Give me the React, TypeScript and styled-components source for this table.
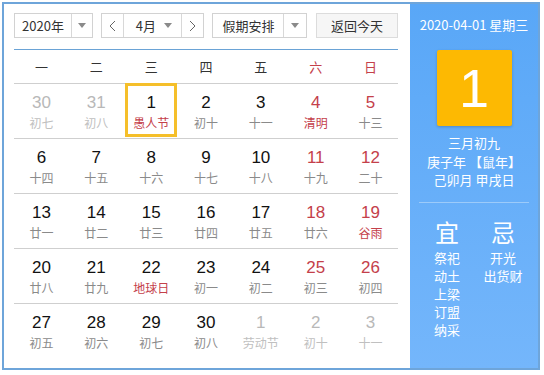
import React from 'react';
import styled, { createGlobalStyle } from 'styled-components';

const GlobalStyle = createGlobalStyle`
  html, body {
    margin: 0;
    padding: 0;
    background: #ffffff;
    font-family: "Liberation Sans", "Noto Sans CJK SC", sans-serif;
  }
`;

type Day = {
  num: number;
  lunar: string;
  other?: boolean;
  weekend?: boolean;
  festival?: boolean;
  selected?: boolean;
};

const weeks: Day[][] = [
  [
    { num: 30, lunar: '初七', other: true },
    { num: 31, lunar: '初八', other: true },
    { num: 1, lunar: '愚人节', festival: true, selected: true },
    { num: 2, lunar: '初十' },
    { num: 3, lunar: '十一' },
    { num: 4, lunar: '清明', weekend: true, festival: true },
    { num: 5, lunar: '十三', weekend: true },
  ],
  [
    { num: 6, lunar: '十四' },
    { num: 7, lunar: '十五' },
    { num: 8, lunar: '十六' },
    { num: 9, lunar: '十七' },
    { num: 10, lunar: '十八' },
    { num: 11, lunar: '十九', weekend: true },
    { num: 12, lunar: '二十', weekend: true },
  ],
  [
    { num: 13, lunar: '廿一' },
    { num: 14, lunar: '廿二' },
    { num: 15, lunar: '廿三' },
    { num: 16, lunar: '廿四' },
    { num: 17, lunar: '廿五' },
    { num: 18, lunar: '廿六', weekend: true },
    { num: 19, lunar: '谷雨', weekend: true, festival: true },
  ],
  [
    { num: 20, lunar: '廿八' },
    { num: 21, lunar: '廿九' },
    { num: 22, lunar: '地球日', festival: true },
    { num: 23, lunar: '初一' },
    { num: 24, lunar: '初二' },
    { num: 25, lunar: '初三', weekend: true },
    { num: 26, lunar: '初四', weekend: true },
  ],
  [
    { num: 27, lunar: '初五' },
    { num: 28, lunar: '初六' },
    { num: 29, lunar: '初七' },
    { num: 30, lunar: '初八' },
    { num: 1, lunar: '劳动节', other: true },
    { num: 2, lunar: '初十', other: true },
    { num: 3, lunar: '十一', other: true },
  ],
];

const weekdays = ['一', '二', '三', '四', '五', '六', '日'];

const Caret = () => (
  <svg width="8" height="5" viewBox="0 0 8 5">
    <path d="M0 0 L8 0 L4 5 Z" fill="#8a8a8a" />
  </svg>
);

const Chevron = ({ dir }: { dir: 'left' | 'right' }) => (
  <svg width="7" height="12" viewBox="0 0 7 12">
    <path
      d={dir === 'left' ? 'M6 1 L1 6 L6 11' : 'M1 1 L6 6 L1 11'}
      fill="none"
      stroke="#666"
      strokeWidth="1"
    />
  </svg>
);

const App = () => {
  return (
    <>
      <GlobalStyle />
      <Widget>
        <Main>
          <Toolbar>
            <Select width={79}>
              <SelectText width={56}>2020年</SelectText>
              <SelectArrow>
                <Caret />
              </SelectArrow>
            </Select>
            <Group>
              <StepButton>
                <Chevron dir="left" />
              </StepButton>
              <MonthSelect>
                <span>4月</span>
                <Caret />
              </MonthSelect>
              <StepButton last>
                <Chevron dir="right" />
              </StepButton>
            </Group>
            <Select width={95}>
              <SelectText width={70}>假期安排</SelectText>
              <SelectArrow>
                <Caret />
              </SelectArrow>
            </Select>
            <TodayButton>返回今天</TodayButton>
          </Toolbar>
          <Weekdays>
            {weekdays.map((w, i) => (
              <Weekday key={w} weekend={i >= 5}>
                {w}
              </Weekday>
            ))}
          </Weekdays>
          {weeks.map((week, wi) => (
            <Week key={wi} last={wi === weeks.length - 1}>
              {week.map((d, di) => (
                <Cell key={di}>
                  {d.selected && <SelectedFrame />}
                  <DayNum other={d.other} weekend={d.weekend}>
                    {d.num}
                  </DayNum>
                  <Lunar other={d.other} festival={d.festival}>
                    {d.lunar}
                  </Lunar>
                </Cell>
              ))}
            </Week>
          ))}
        </Main>
        <Side>
          <DateLine>2020-04-01 星期三</DateLine>
          <BigDay>1</BigDay>
          <LunarInfo>
            <div>三月初九</div>
            <div>庚子年 【鼠年】</div>
            <div>己卯月 甲戌日</div>
          </LunarInfo>
          <Divider />
          <Advice>
            <AdviceCol>
              <AdviceTitle>宜</AdviceTitle>
              <AdviceItem>祭祀</AdviceItem>
              <AdviceItem>动土</AdviceItem>
              <AdviceItem>上梁</AdviceItem>
              <AdviceItem>订盟</AdviceItem>
              <AdviceItem>纳采</AdviceItem>
            </AdviceCol>
            <AdviceCol>
              <AdviceTitle>忌</AdviceTitle>
              <AdviceItem>开光</AdviceItem>
              <AdviceItem>出货财</AdviceItem>
            </AdviceCol>
          </Advice>
        </Side>
      </Widget>
    </>
  );
};

export default App;

const Widget = styled.div`
  display: flex;
  margin: 2px;
  width: 534px;
  height: 364px;
  border: 2px solid #6ea5da;
  background: #ffffff;
`;

const Main = styled.div`
  width: 384px;
  padding: 9px 12px 0 10px;
  display: flex;
  flex-direction: column;
`;

const Toolbar = styled.div`
  display: flex;
  align-items: center;
  gap: 8px;
  height: 25px;
  padding-bottom: 11px;
  border-bottom: 1px solid #6aa3d6;
  font-family: "Noto Sans CJK SC", sans-serif;
  font-size: 13px;
  color: #333;
`;

const Select = styled.div<{ width: number }>`
  display: flex;
  box-sizing: border-box;
  width: ${(p) => p.width}px;
  height: 25px;
  border: 1px solid #d2d2d2;
  background: #fff;
`;

const SelectText = styled.div<{ width: number }>`
  width: ${(p) => p.width}px;
  display: flex;
  align-items: center;
  justify-content: center;
  border-right: 1px solid #d8d8d8;
`;

const SelectArrow = styled.div`
  flex: 1;
  display: flex;
  align-items: center;
  justify-content: center;
`;

const Group = styled.div`
  display: flex;
  box-sizing: border-box;
  width: 104px;
  height: 25px;
  border: 1px solid #d2d2d2;
  background: #fff;
`;

const StepButton = styled.div<{ last?: boolean }>`
  width: 21px;
  display: flex;
  align-items: center;
  justify-content: center;
  ${(p) => (p.last ? 'border-left: 1px solid #d8d8d8;' : 'border-right: 1px solid #d8d8d8;')}
`;

const MonthSelect = styled.div`
  flex: 1;
  display: flex;
  align-items: center;
  justify-content: space-between;
  padding: 0 9px 0 12px;
`;

const TodayButton = styled.div`
  box-sizing: border-box;
  width: 82px;
  height: 25px;
  display: flex;
  align-items: center;
  justify-content: center;
  border: 1px solid #dcdcdc;
  background: #f6f6f6;
  margin-left: 1px;
`;

const Weekdays = styled.div`
  display: grid;
  grid-template-columns: repeat(7, 1fr);
  height: 33px;
  align-items: center;
  border-bottom: 1px solid #cfcfcf;
  font-family: "Noto Sans CJK SC", sans-serif;
  font-size: 13px;
`;

const Weekday = styled.div<{ weekend?: boolean }>`
  text-align: center;
  color: ${(p) => (p.weekend ? '#c4404a' : '#333')};
`;

const Week = styled.div<{ last?: boolean }>`
  display: grid;
  grid-template-columns: repeat(7, 1fr);
  height: 54px;
  border-bottom: 1px solid ${(p) => (p.last ? 'transparent' : '#cfcfcf')};
`;

const Cell = styled.div`
  position: relative;
  display: flex;
  flex-direction: column;
  align-items: center;
  padding-top: 9px;
  gap: 2px;
`;

const SelectedFrame = styled.div`
  position: absolute;
  top: -1px;
  left: 1px;
  right: 2px;
  height: 54px;
  border: 3px solid #f5bf2a;
  box-sizing: border-box;
`;

const DayNum = styled.div<{ other?: boolean; weekend?: boolean }>`
  font-size: 17px;
  line-height: 20px;
  color: ${(p) => (p.other ? '#b8b8b8' : p.weekend ? '#c4404a' : '#111')};
`;

const Lunar = styled.div<{ other?: boolean; festival?: boolean }>`
  font-family: "Noto Sans CJK SC", sans-serif;
  font-size: 12px;
  line-height: 16px;
  color: ${(p) => (p.other ? '#c0c0c0' : p.festival ? '#c4404a' : '#8a8a8a')};
`;

const Side = styled.div`
  width: 128px;
  display: flex;
  flex-direction: column;
  align-items: center;
  background: linear-gradient(#59a7f7, #74b6fb);
  color: #fff;
  font-family: "Noto Sans CJK SC", sans-serif;
  padding-top: 12px;
`;

const DateLine = styled.div`
  font-size: 13px;
  line-height: 18px;
`;

const BigDay = styled.div`
  margin-top: 16px;
  width: 75px;
  height: 76px;
  display: flex;
  align-items: center;
  justify-content: center;
  background: #fdb902;
  border-radius: 2px;
  box-shadow: 0 1px 3px rgba(0, 0, 0, 0.2);
  font-family: "Liberation Sans", sans-serif;
  font-size: 54px;
`;

const LunarInfo = styled.div`
  margin-top: 8px;
  text-align: center;
  font-size: 13px;
  line-height: 18.5px;
`;

const Divider = styled.div`
  margin-top: 12px;
  width: 110px;
  height: 1px;
  background: #9ccbfa;
`;

const Advice = styled.div`
  margin-top: 14px;
  display: grid;
  grid-template-columns: 56px 56px;
  padding-left: 2px;
`;

const AdviceCol = styled.div`
  display: flex;
  flex-direction: column;
  align-items: center;
`;

const AdviceTitle = styled.div`
  font-size: 24px;
  line-height: 30px;
  margin-bottom: 2px;
`;

const AdviceItem = styled.div`
  font-size: 13px;
  line-height: 18px;
`;
